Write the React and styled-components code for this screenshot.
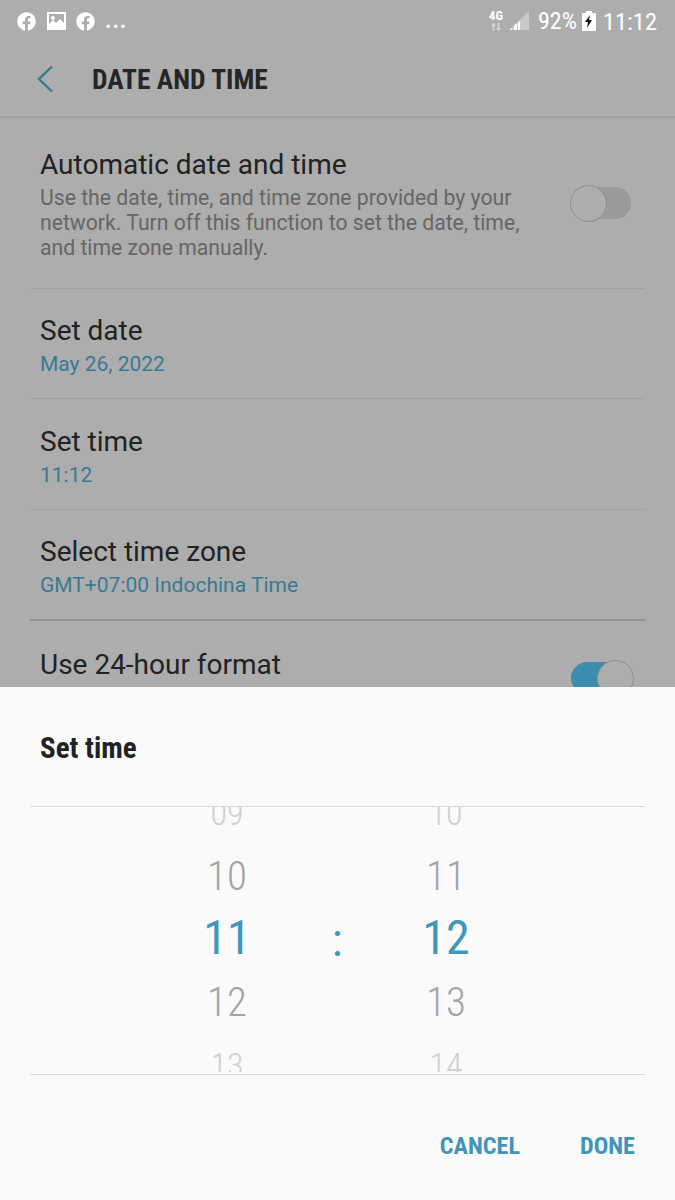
import React from "react";
import styled, { createGlobalStyle } from "styled-components";
import { FaFacebook } from "react-icons/fa";

const Global = createGlobalStyle`
  html, body {
    margin: 0;
    padding: 0;
    background: #adadad;
  }
  * {
    box-sizing: border-box;
  }
`;

const HOURS = ["09", "10", "11", "12", "13"];
const MINUTES = ["10", "11", "12", "13", "14"];

const App = () => {
  return (
    <Screen>
      <Global />
      <StatusBar>
        <StatusLeft>
          <FaFacebook size={19} />
          <svg width="20" height="20" viewBox="0 0 20 20">
            <path fill="#fff" fillRule="evenodd" d="M1 1h19v18H1zM3 3v10l4-4 3 3 4-4 4 4V3zM7 5a2 2 0 1 1-.01 0z" />
          </svg>
          <FaFacebook size={19} />
          <Dots>...</Dots>
        </StatusLeft>
        <StatusRight>
          <NetBadge>
            <span>4G</span>
            <svg width="10" height="8" viewBox="0 0 10 8">
              <path fill="#d4d4d4" d="M2.5 0 5 3H3.4v5H1.6V3H0zM6.6 0h1.8v5H10L7.5 8 5 5h1.6z" />
            </svg>
          </NetBadge>
          <svg width="20" height="20" viewBox="0 0 20 20">
            <path fill="#c9c9c9" d="M20 0v19H0z" />
            <path fill="#fff" d="M1 19h2v-2zM5 19h3v-7l-3 3zM9 19h2v-9l-2 2z" />
          </svg>
          <Percent>92%</Percent>
          <svg width="14" height="20" viewBox="0 0 14 20">
            <path fill="#fff" d="M4 0h6v2h4v18H0V2h4z" />
            <path fill="#111" d="M8 4 3 11h3l-1 6 5-8H7z" />
          </svg>
          <Clock>11:12</Clock>
        </StatusRight>
      </StatusBar>

      <Header>
        <svg width="18" height="28" viewBox="0 0 18 28">
          <path d="M16 1.5 3 14l13 12.5" fill="none" stroke="#387a94" strokeWidth="2.4" />
        </svg>
        <HeaderTitle>DATE AND TIME</HeaderTitle>
      </Header>

      <Row $height={171} $pad={0}>
        <RowText>
          <RowTitle>Automatic date and time</RowTitle>
          <RowDesc>
            Use the date, time, and time zone provided by your network. Turn off this function to set the date, time,
            and time zone manually.
          </RowDesc>
        </RowText>
        <Switch />
      </Row>
      <Row $height={110} $pad={4}>
        <RowText>
          <RowTitle>Set date</RowTitle>
          <RowValue>May 26, 2022</RowValue>
        </RowText>
      </Row>
      <Row $height={111} $pad={5}>
        <RowText>
          <RowTitle>Set time</RowTitle>
          <RowValue>11:12</RowValue>
        </RowText>
      </Row>
      <Row $height={111} $pad={5} $strong>
        <RowText>
          <RowTitle>Select time zone</RowTitle>
          <RowValue>GMT+07:00 Indochina Time</RowValue>
        </RowText>
      </Row>
      <Row $height={90} $pad={26} $top>
        <RowText>
          <RowTitle>Use 24-hour format</RowTitle>
        </RowText>
        <Switch $on />
      </Row>

      <Sheet>
        <SheetTitle>Set time</SheetTitle>
        <Wheel>
          <Column>
            {HOURS.map((h, i) => (
              <Num key={h} $dist={Math.abs(i - 2)}>{h}</Num>
            ))}
          </Column>
          <Colon>:</Colon>
          <Column>
            {MINUTES.map((m, i) => (
              <Num key={m} $dist={Math.abs(i - 2)}>{m}</Num>
            ))}
          </Column>
        </Wheel>
        <Actions>
          <ActionButton>CANCEL</ActionButton>
          <ActionButton>DONE</ActionButton>
        </Actions>
      </Sheet>
    </Screen>
  );
};

const Screen = styled.div`
  position: relative;
  width: 675px;
  height: 1200px;
  overflow: hidden;
  background: #adadad;
  font-family: Roboto, "Liberation Sans", sans-serif;
  color: #222;
`;

const StatusBar = styled.div`
  height: 42px;
  padding: 0 18px 0 17px;
  display: flex;
  align-items: center;
  justify-content: space-between;
  color: #fff;
  font-family: "Roboto Condensed", Roboto, sans-serif;
`;

const StatusLeft = styled.div`
  display: flex;
  align-items: center;
  gap: 10px;
`;

const Dots = styled.span`
  font-size: 22px;
  font-weight: 700;
  line-height: 20px;
  letter-spacing: 1px;
`;

const StatusRight = styled.div`
  display: flex;
  align-items: center;
  gap: 6px;
`;

const NetBadge = styled.div`
  display: flex;
  flex-direction: column;
  align-items: center;
  gap: 2px;
  font-size: 13px;
  font-weight: 700;
  line-height: 10px;
  svg {
    display: block;
  }
`;

const Percent = styled.span`
  font-size: 24px;
  margin: 0 -1px 0 3px;
`;

const Clock = styled.span`
  font-size: 24.5px;
  margin-left: 1px;
`;

const Header = styled.div`
  height: 76px;
  padding: 0 0 0 36px;
  display: flex;
  align-items: center;
  gap: 38px;
  border-bottom: 2px solid #a2a2a2;
`;

const HeaderTitle = styled.h1`
  margin: 0;
  font-family: "Roboto Condensed", Roboto, sans-serif;
  font-size: 27.5px;
  font-weight: 700;
  color: #262626;
`;

const Row = styled.div`
  height: ${(p) => p.$height}px;
  margin: 0 30px;
  padding: ${(p) => p.$pad}px 14px 0 10px;
  display: flex;
  align-items: ${(p) => (p.$top ? "flex-start" : "center")};
  justify-content: space-between;
  border-bottom: ${(p) => (p.$top ? "none" : `${p.$strong ? 2 : 1}px solid ${p.$strong ? "#939393" : "#a0a0a0"}`)};
`;

const RowText = styled.div`
  display: flex;
  flex-direction: column;
  width: 490px;
`;

const RowTitle = styled.div`
  font-size: 28px;
  line-height: 36px;
  color: #222;
`;

const RowDesc = styled.div`
  font-size: 21.2px;
  line-height: 25px;
  color: #666;
  margin-top: 2px;
`;

const RowValue = styled.div`
  font-size: 21px;
  line-height: 30px;
  color: #387a94;
`;

const Switch = styled.div`
  position: relative;
  flex: none;
  width: 60px;
  height: 32px;
  border-radius: 16px;
  margin-top: ${(p) => (p.$on ? "15px" : "0")};
  background: ${(p) => (p.$on ? "#3c8dad" : "#9a9a9a")};
  &::after {
    content: "";
    position: absolute;
    top: -2px;
    left: ${(p) => (p.$on ? "26px" : "-1px")};
    width: 35px;
    height: 35px;
    border-radius: 50%;
    background: #adadad;
    border: 1.5px solid #8f8f8f;
  }
`;

const Sheet = styled.div`
  position: absolute;
  left: 0;
  right: 0;
  bottom: 0;
  height: 513px;
  background: #fafafa;
  display: flex;
  flex-direction: column;
`;

const SheetTitle = styled.div`
  height: 119px;
  padding: 43px 40px 0;
  font-family: "Roboto Condensed", Roboto, sans-serif;
  font-size: 29px;
  line-height: 36px;
  font-weight: 700;
  color: #222;
`;

const Wheel = styled.div`
  height: 269px;
  margin: 0 30px;
  padding: 0 0 2px 97px;
  border-top: 1px solid #d8d8d8;
  border-bottom: 1px solid #d8d8d8;
  display: grid;
  grid-template-columns: 200px 20px 198px;
  overflow: hidden;
  font-family: "Roboto Condensed", Roboto, sans-serif;
`;

const Column = styled.div`
  display: flex;
  flex-direction: column;
  align-items: center;
  justify-content: center;
  overflow: hidden;
`;

const NUM_SIZE = [48, 41, 34];
const NUM_COLOR = ["#3f97ba", "#a3a3a3", "#cfcfcf"];

const Num = styled.div`
  flex: none;
  height: 63px;
  line-height: ${(p) => (p.$dist === 0 ? 59 : 63)}px;
  font-weight: ${(p) => (p.$dist === 0 ? 400 : 300)};
  font-size: ${(p) => NUM_SIZE[p.$dist]}px;
  color: ${(p) => NUM_COLOR[p.$dist]};
`;

const Colon = styled.div`
  display: flex;
  align-items: center;
  justify-content: center;
  font-size: 46px;
  color: #3f97ba;
`;

const Actions = styled.div`
  flex: 1;
  display: flex;
  justify-content: flex-end;
  align-items: center;
  gap: 60px;
  padding: 16px 40px 0 0;
  font-family: "Roboto Condensed", Roboto, sans-serif;
`;

const ActionButton = styled.div`
  font-size: 24.2px;
  font-weight: 700;
  color: #4295b6;
`;

export default App;
